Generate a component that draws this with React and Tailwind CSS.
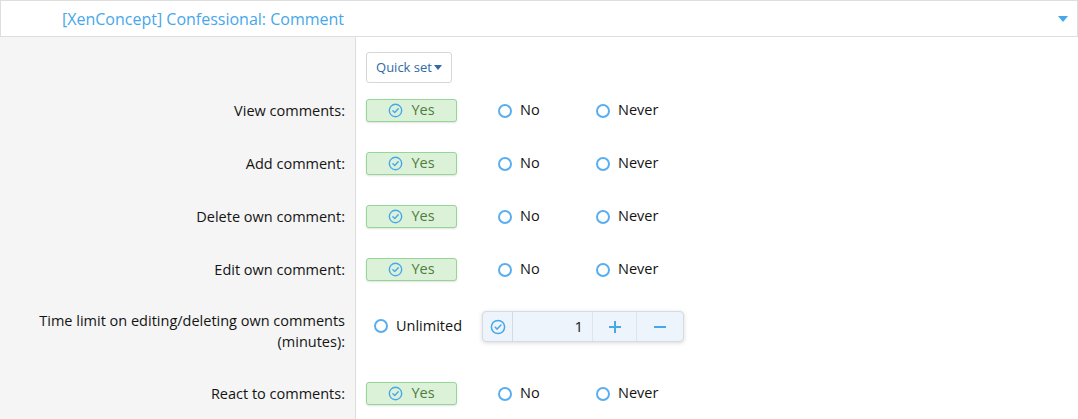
import React from "react";

const font = { fontFamily: '"Open Sans", "Noto Sans", sans-serif' };

function CheckCircle({ className = "" }) {
  return (
    <svg viewBox="0 0 16 16" className={className} fill="none" stroke="currentColor">
      <circle cx="8" cy="8" r="6.6" strokeWidth="1.5" />
      <path d="M5.2 8.2 L7.2 10.1 L10.9 6.1" strokeWidth="1.5" strokeLinecap="round" strokeLinejoin="round" />
    </svg>
  );
}

function YesBtn() {
  return (
    <div className="flex h-[23px] w-[91px] items-center justify-center gap-[8px] rounded-[3px] border border-[#95d696] bg-[#dcf2d8] shadow-[0_1px_2px_rgba(0,0,0,0.12)]">
      <CheckCircle className="h-[15px] w-[15px] text-[#47a7eb]" />
      <span className="text-[14.5px] leading-none text-[#4e7d3f]">Yes</span>
    </div>
  );
}

function Radio({ label }) {
  return (
    <div className="flex items-center gap-[8px]">
      <span className="box-border h-[14px] w-[14px] rounded-full border-2 border-[#5aaef0] bg-white" />
      <span className="text-[14.5px] leading-none text-[#141414]">{label}</span>
    </div>
  );
}

function Row({ label, children, labelClass = "" }) {
  return (
    <div className="flex">
      <div className={"w-[356px] shrink-0 border-r border-[#dcdcdc] bg-[#f5f5f5] pr-[10px] text-right text-[14.5px] leading-[21px] text-[#141414] " + labelClass}>
        {label}
      </div>
      <div className="flex-1 pl-[10px]">{children}</div>
    </div>
  );
}

function Choices() {
  return (
    <div className="flex h-[53px] items-center">
      <YesBtn />
      <div className="ml-[41px] w-[98px]">
        <Radio label="No" />
      </div>
      <Radio label="Never" />
    </div>
  );
}

export default function App() {
  const rows = ["View comments:", "Add comment:", "Delete own comment:", "Edit own comment:"];
  return (
    <div className="h-[419px] w-[1078px] overflow-hidden bg-white" style={font}>
      <div className="flex h-[37px] items-center justify-between border border-[#dedede] pl-[61px] pr-[9px]">
        <span className="text-[16px] text-[#47a7eb]">[XenConcept] Confessional: Comment</span>
        <svg viewBox="0 0 10 6" className="h-[6px] w-[10px] text-[#47a7eb]" fill="currentColor">
          <path d="M0 0 H10 L5 6 Z" />
        </svg>
      </div>
      <div className="flex flex-col">
        <Row label="" labelClass="h-[47px]">
          <div className="pt-[15px]">
            <div className="flex h-[31px] w-[86px] items-center justify-center gap-[2px] rounded-[3px] border border-[#d6d6d6] bg-white text-[13px] text-[#2e6aa6]">
              Quick set
              <svg viewBox="0 0 8 5" className="h-[5px] w-[8px]" fill="currentColor">
                <path d="M0 0 H8 L4 5 Z" />
              </svg>
            </div>
          </div>
        </Row>
        {rows.map((r) => (
          <Row key={r} label={r} labelClass="flex h-[53px] items-center justify-end">
            <Choices />
          </Row>
        ))}
        <Row
          label={
            <div className="pt-[14px]">
              Time limit on editing/deleting own comments
              <br />
              (minutes):
            </div>
          }
          labelClass="h-[71px]"
        >
          <div className="flex items-start pl-[8px] pt-[15px]">
            <div className="flex h-[30px] items-center">
              <div className="w-[108px]">
                <Radio label="Unlimited" />
              </div>
            </div>
            <div className="flex h-[31px] w-[202px] overflow-hidden rounded-[4px] border border-[#d4dbe3] bg-[#edf4fc] shadow-[0_1px_4px_rgba(0,0,0,0.15)]">
              <div className="flex w-[30px] items-center justify-center border-r border-[#d4dbe3]">
                <CheckCircle className="h-[16px] w-[16px] text-[#47a7eb]" />
              </div>
              <div className="flex w-[80px] items-center justify-end border-r border-[#dde4ec] pr-[9px] text-[15px] text-[#141414]">
                1
              </div>
              <div className="flex w-[44px] items-center justify-center border-r border-[#dde4ec] text-[#47a7eb]">
                <svg viewBox="0 0 12 12" className="h-[12px] w-[12px]" stroke="currentColor" strokeWidth="2">
                  <path d="M6 0 V12 M0 6 H12" />
                </svg>
              </div>
              <div className="flex flex-1 items-center justify-center text-[#47a7eb]">
                <svg viewBox="0 0 12 12" className="h-[12px] w-[12px]" stroke="currentColor" strokeWidth="2">
                  <path d="M0 6 H12" />
                </svg>
              </div>
            </div>
          </div>
        </Row>
        <Row label="React to comments:" labelClass="flex h-[53px] items-center justify-end">
          <Choices />
        </Row>
      </div>
    </div>
  );
}
